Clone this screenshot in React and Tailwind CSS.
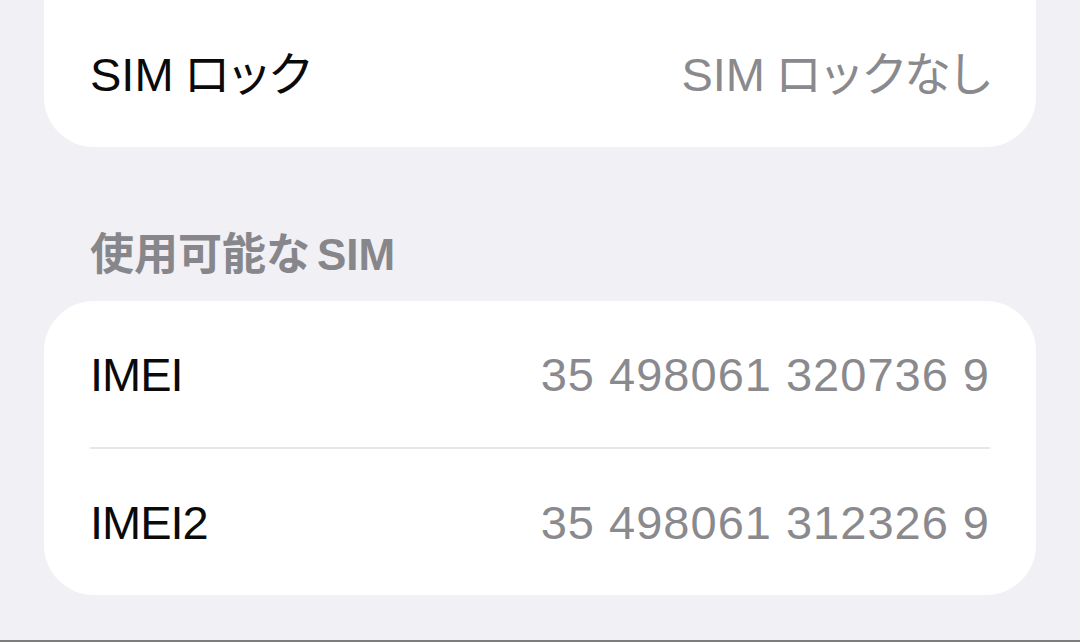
export default function App() {
  const sims = [
    { label: "IMEI", value: "35 498061 320736 9" },
    { label: "IMEI2", value: "35 498061 312326 9" },
  ];

  const font = { fontFamily: '"Liberation Sans", "Noto Sans CJK JP", sans-serif' };

  return (
    <div
      className="flex h-[642px] w-[1080px] flex-col overflow-hidden bg-[#f0f0f5]"
      style={font}>
      <div className="flex flex-1 flex-col px-[44px]">
        {/* SIM lock card, scrolled partly out of view */}
        <div className="flex h-[147px] items-center justify-between rounded-b-[50px] bg-white px-[46px] pt-px">
          <span className="text-[47px] leading-none text-[#0a0a0a]">
            SIM<span className="ml-[10px] tracking-[-5px]">ロック</span>
          </span>
          <span className="text-[47px] leading-none text-[#8a8a8e]">
            SIM<span className="ml-[10px] tracking-[-4px]">ロックなし</span>
          </span>
        </div>

        <div className="flex h-[154px] items-end px-[46px] pb-[24px]">
          <h2 className="text-[44px] font-semibold leading-none text-[#86868b]">
            使用可能な<span className="ml-[7px]">SIM</span>
          </h2>
        </div>

        <div className="rounded-[50px] bg-white px-[46px]">
          {sims.map((sim, i) => (
            <div
              key={sim.label}
              className={
                i > 0
                  ? "flex h-[148px] items-center justify-between border-t-[2px] border-[#e6e6e8]"
                  : "flex h-[146px] items-center justify-between"
              }>
              <span className="text-[47px] leading-none tracking-[-1px] text-[#0a0a0a]">
                {sim.label}
              </span>
              <span className="text-[47px] leading-none tracking-[1px] text-[#8a8a8e]">
                {sim.value}
              </span>
            </div>
          ))}
        </div>
      </div>
      <div className="h-[2px] bg-[#7d7d7d]" />
    </div>
  );
}
